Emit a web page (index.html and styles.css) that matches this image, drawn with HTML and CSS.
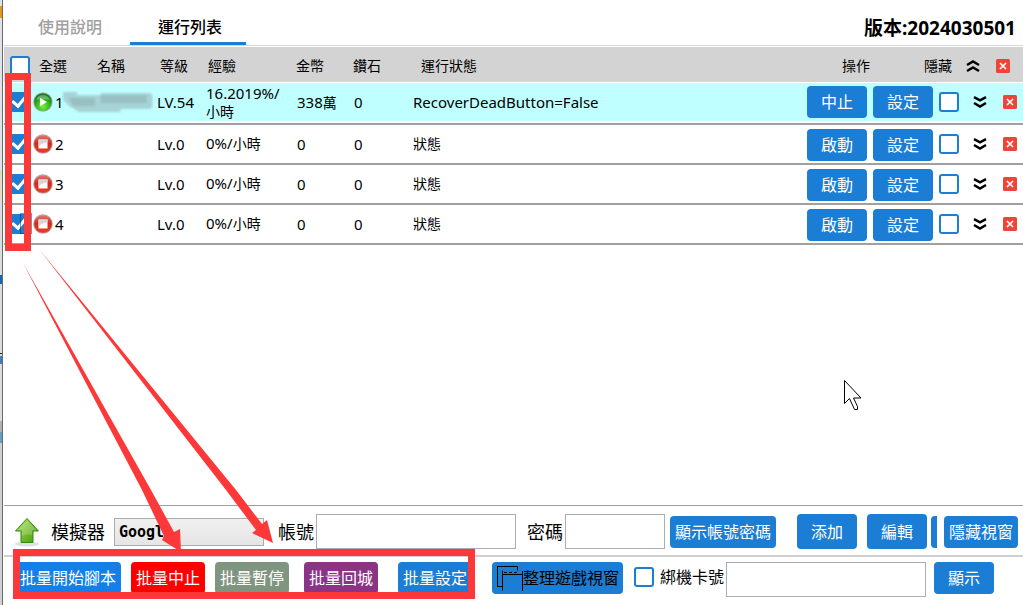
FILE: index.html
```html
<!DOCTYPE html>
<html lang="zh-Hant">
<head>
<meta charset="utf-8">
<title>運行列表</title>
<link rel="stylesheet" href="styles.css">
</head>
<body>
<svg class="defs" aria-hidden="true">
  <defs>
    <radialGradient id="gGreen" cx="50%" cy="75%" r="65%"><stop offset="0" stop-color="#7df03c"/><stop offset="0.6" stop-color="#2cb61c"/><stop offset="1" stop-color="#157a18"/></radialGradient>
    <linearGradient id="gRed" x1="0" y1="0" x2="0" y2="1"><stop offset="0" stop-color="#e8796f"/><stop offset="0.45" stop-color="#cf2a20"/><stop offset="1" stop-color="#f03a1c"/></linearGradient>
    <linearGradient id="gUp" x1="0" y1="0" x2="1" y2="1"><stop offset="0" stop-color="#b4e45c"/><stop offset="1" stop-color="#3f9a0c"/></linearGradient>
    <symbol id="play" viewBox="0 0 20 20"><circle cx="10" cy="10" r="9.8" fill="#a9ada9"/><circle cx="10" cy="10" r="8.8" fill="url(#gGreen)"/><path d="M3 8a7.4 7.4 0 0 1 14 0q-7-2-14 0z" fill="#fff" opacity=".3"/><path d="M7 5.800 14 10l-7 4.200z" fill="#fff"/></symbol>
    <symbol id="stop" viewBox="0 0 20 20"><circle cx="10" cy="10" r="9.8" fill="#b0a8a8"/><circle cx="10" cy="10" r="8.800" fill="url(#gRed)"/><path d="M5.500 5.500h9v9h-9z" fill="#fff"/><path d="M5.500 5.500h9v3q-5 0-9 4z" fill="#d9d5d4"/></symbol>
    <symbol id="down" viewBox="0 0 14 14"><path d="M1 2.2 7 5.4l6-3.2M1 8l6 3.6L13 8" fill="none" stroke="#000" stroke-width="2.5"/></symbol>
    <symbol id="upx" viewBox="0 0 14 14"><path d="M1 6l6-3.6L13 6M1 12l6-3.6 6 3.6" fill="none" stroke="#000" stroke-width="2.3"/></symbol>
    <symbol id="close" viewBox="0 0 14 14"><rect width="14" height="14" rx="1.5" fill="#f04438"/><path d="M4 4l6 6M10 4l-6 6" stroke="#fff" stroke-width="1.6"/></symbol>
  </defs>
</svg>
<div class="edge"></div>
<div class="app">
  <header class="tabs">
    <nav class="tab-list">
      <a class="tab" href="#help">使用說明</a>
      <a class="tab active" href="#list">運行列表</a>
    </nav>
    <div class="version">版本:2024030501</div>
  </header>

  <main class="list">
    <table class="grid">
      <colgroup>
        <col class="c-check"><col class="c-id"><col class="c-name"><col class="c-lv"><col class="c-exp"><col class="c-gold"><col class="c-gem"><col><col class="c-ops">
      </colgroup>
      <thead>
        <tr>
          <th><input class="box" type="checkbox" id="all"></th>
          <th class="h-id"><label for="all">全選</label></th>
          <th class="h-name">名稱</th>
          <th class="h-lv">等級</th>
          <th class="h-lv">經驗</th>
          <th class="h-gold">金幣</th>
          <th class="h-gold">鑽石</th>
          <th class="h-status">運行狀態</th>
          <th><div class="head-ops"><span>操作</span><span class="h-hide">隱藏</span><button class="icon" aria-label="全部上移"><svg><use href="#upx"/></svg></button><button class="icon last" aria-label="全部刪除"><svg><use href="#close"/></svg></button></div></th>
        </tr>
      </thead>
      <tbody>
        <tr class="running">
          <td><input class="box" type="checkbox" checked aria-label="選擇 1"></td>
          <td colspan="2"><div class="id"><svg class="state"><use href="#play"/></svg>1<svg class="mask" viewBox="0 0 92 24"><path d="M2 2h14v3h24V3h48q4 0 4 4v8q0 4-4 4H60v3H18L8 16 2 10z"/><path class="m2" d="M40 5h46v8H40zM8 8h26v8H12z"/></svg></div></td>
          <td class="lv">LV.54</td><td class="exp">16.2019%/<br><span class="cjk">小時</span></td><td class="num">338<span class="cjk">萬</span></td><td class="num">0</td><td class="msg">RecoverDeadButton=False</td>
          <td><div class="ops"><button class="btn">中止</button><button class="btn">設定</button><input class="box" type="checkbox" aria-label="隱藏 1"><button class="icon" aria-label="下移"><svg><use href="#down"/></svg></button><button class="icon last" aria-label="刪除"><svg><use href="#close"/></svg></button></div></td>
        </tr>
        <tr class="idle">
          <td><input class="box" type="checkbox" checked aria-label="選擇 2"></td>
          <td colspan="2"><div class="id"><svg class="state"><use href="#stop"/></svg>2</div></td>
          <td class="lv">Lv.0</td><td class="exp">0%/<span class="cjk">小時</span></td><td class="num">0</td><td class="num">0</td><td class="msg cjk">狀態</td>
          <td><div class="ops"><button class="btn">啟動</button><button class="btn">設定</button><input class="box" type="checkbox" aria-label="隱藏 2"><button class="icon" aria-label="下移"><svg><use href="#down"/></svg></button><button class="icon last" aria-label="刪除"><svg><use href="#close"/></svg></button></div></td>
        </tr>
        <tr class="idle">
          <td><input class="box" type="checkbox" checked aria-label="選擇 3"></td>
          <td colspan="2"><div class="id"><svg class="state"><use href="#stop"/></svg>3</div></td>
          <td class="lv">Lv.0</td><td class="exp">0%/<span class="cjk">小時</span></td><td class="num">0</td><td class="num">0</td><td class="msg cjk">狀態</td>
          <td><div class="ops"><button class="btn">啟動</button><button class="btn">設定</button><input class="box" type="checkbox" aria-label="隱藏 3"><button class="icon" aria-label="下移"><svg><use href="#down"/></svg></button><button class="icon last" aria-label="刪除"><svg><use href="#close"/></svg></button></div></td>
        </tr>
        <tr class="idle">
          <td><input class="box" type="checkbox" checked aria-label="選擇 4"></td>
          <td colspan="2"><div class="id"><svg class="state"><use href="#stop"/></svg>4</div></td>
          <td class="lv">Lv.0</td><td class="exp">0%/<span class="cjk">小時</span></td><td class="num">0</td><td class="num">0</td><td class="msg cjk">狀態</td>
          <td><div class="ops"><button class="btn">啟動</button><button class="btn">設定</button><input class="box" type="checkbox" aria-label="隱藏 4"><button class="icon" aria-label="下移"><svg><use href="#down"/></svg></button><button class="icon last" aria-label="刪除"><svg><use href="#close"/></svg></button></div></td>
        </tr>
      </tbody>
    </table>
  </main>

  <section class="bar account">
    <svg class="up" viewBox="0 0 26 30"><ellipse cx="13" cy="27" rx="12" ry="2.5" fill="#000" opacity=".12"/><path d="M13 1.5 24.5 14H19v11.500H7V14H1.500z" fill="url(#gUp)" stroke="#2f8a10" stroke-linejoin="round"/><path d="M13 3.500 22 13h-4v5q-6-2-10 1v-6H4z" fill="#fff" opacity=".2"/></svg>
    <label class="lab emu-lab" for="emu">模擬器</label>
    <select id="emu" class="emu"><option>Googl</option></select>
    <label class="lab acc-lab" for="acc">帳號</label>
    <input id="acc" class="field wide" type="text">
    <label class="lab pw-lab" for="pw">密碼</label>
    <input id="pw" class="field" type="text">
    <button class="btn show-pw">顯示帳號密碼</button>
    <button class="btn tall add">添加</button>
    <button class="btn tall edit">編輯</button>
    <button class="btn sliver" aria-label="更多"></button>
    <button class="btn four hide-win">隱藏視窗</button>
  </section>

  <section class="bar batch">
    <button class="btn start">批量開始腳本</button>
    <button class="btn four stop">批量中止</button>
    <button class="btn four pause">批量暫停</button>
    <button class="btn four town">批量回城</button>
    <button class="btn four setup">批量設定</button>
    <button class="btn arrange"><svg viewBox="0 0 26 26"><path d="M5.500 21.500H.5V1.500h20v4M5.500 5.500v20M5.500 9.500h20M25.500 6v20" fill="none" stroke="#000"/><path d="M7 7.500h13" fill="none" stroke="#000" stroke-dasharray="3 2"/></svg>整理遊戲視窗</button>
    <input class="box bind" type="checkbox" id="bind">
    <label class="bind-lab" for="bind">綁機卡號</label>
    <input class="field card" type="text" aria-label="卡號">
    <button class="btn">顯示</button>
  </section>
</div>

<svg class="marks" width="1023" height="605" viewBox="0 0 1023 605" aria-hidden="true">
  <path d="M20.500 213.500h11v20h-11z" fill="none" stroke="#222" stroke-dasharray="1 1"/>
  <g fill="none" stroke="#fc3838" stroke-width="7"><path d="M8.500 76.500h19v171h-19z"/><path d="M16.500 552.500h455v43h-455z"/></g>
  <g fill="#fc3838">
    <path d="M23 263 151 490 174 532 180 529 181 552 162 540 164 536 142 490z"/>
    <path d="M39 249 236 490 262 524 267 520 273 543 252 533 256 530 226 490z"/>
  </g>
  <path d="M844.500 380.500v23l5-5 5 11h3v-3l-4-8.500h7.500z" fill="#fff" stroke="#000"/>
</svg>
</body>
</html>
```
FILE: styles.css
```css
* { box-sizing: border-box; }

body {
  margin: 0;
  display: flex;
  min-height: 100vh;
  position: relative;
  background: #fff;
  color: #000;
  font: 15px/18px "Noto Sans", "Noto Sans CJK TC", sans-serif;
}

button, input, select { font: inherit; margin: 0; }
.defs { position: absolute; width: 0; height: 0; }

.edge {
  flex: none;
  width: 3px;
  border-right: 1px solid #6a6a6a;
  background: linear-gradient(#dfe3e8 6px, #e09a20 6px, #e09a20 18px, #dfe3e8 18px, #dfe3e8 170px, #e3dcc0 170px, #e3dcc0 200px, #dcdcdc 200px, #dcdcdc 275px, #1565b0 275px, #1565b0 284px, #dcdcdc 284px, #dcdcdc 353px, #222 353px, #222 354px, #dcdcdc 354px, #dcdcdc 356px, #3f7fc0 356px, #3f7fc0 364px, #dcdcdc 364px, #dcdcdc 421px, #b0b0b0 421px, #b0b0b0 432px, #62a0c0 432px, #62a0c0 443px, #d0d0d0 443px);
}

.app { flex: 1; min-width: 0; display: flex; flex-direction: column; }

.tabs {
  display: flex;
  justify-content: space-between;
  height: 46px;
  margin: 0 0 1px 1px;
  padding-right: 7px;
  border-bottom: 1px solid #d6d6d6;
}
.tab-list { display: flex; }
.tab {
  width: 116px;
  height: 45px;
  padding-left: 28px;
  color: #a0a0a0;
  font-size: 16px;
  font-weight: 500;
  line-height: 54px;
  text-decoration: none;
}
.tab:first-child { width: 126px; padding-left: 34px; }
.tab.active { color: #000; border-bottom: 3px solid #1b7dd4; }
.version { font-size: 19px; font-weight: 700; line-height: 56px; }

.list { flex: 1; padding-left: 1px; }
.grid { width: 100%; table-layout: fixed; border-collapse: separate; border-spacing: 0; }
.c-check { width: 28px; }
.c-id { width: 60px; }
.c-name { width: 61px; }
.c-lv { width: 48px; }
.c-exp { width: 88px; }
.c-gold, .c-gem { width: 57px; }
.c-ops { width: 220px; }

th {
  height: 36px;
  padding: 2px 0 0;
  background: #d3d3d3;
  border-bottom: 1px solid #fff;
  font-size: 14px;
  font-weight: 400;
  text-align: left;
  white-space: nowrap;
}
th.h-id { padding-left: 7px; }
th.h-name { padding-left: 5px; }
th.h-lv { padding-left: 7px; }
th.h-gold { padding-left: 7px; }
th.h-status { padding-left: 18px; }
.head-ops { display: flex; align-items: center; padding: 0 13px 0 39px; }
.h-hide { margin: 0 14px 0 auto; }

td { height: 40px; padding: 0 0 1px; border-bottom: 2px solid #a0a0a0; white-space: nowrap; }
.running td {
  height: 42px;
  padding-bottom: 2px;
  background: linear-gradient(#c0ffff 38px, #fff 38px);
}
td.lv { padding-left: 4px; }
td.exp { padding-left: 5px; }
td.num { padding-left: 8px; }
td.msg { padding-left: 10px; }
.cjk { font-size: 14px; }
.id { display: flex; align-items: center; }
.state { width: 20px; height: 20px; margin: 0 2px 0 1px; }
.mask { width: 92px; height: 24px; fill: #a6d3d6; filter: blur(1px); margin-left: -2px; }
.m2 { fill: #98bfc2; }

.box {
  appearance: none;
  display: block;
  flex: none;
  width: 20px;
  height: 20px;
  margin-left: 6px;
  border: 2px solid #1b7dd4;
  border-radius: 3px;
  background: #fff;
}
.box:checked {
  background: #1b7dd4;
  position: relative;
}
.box:checked::after {
  content: "";
  position: absolute;
  left: 3px;
  top: -2px;
  width: 6px;
  height: 12px;
  border: solid #fff;
  border-width: 0 3px 3px 0;
  transform: rotate(40deg);
}

.ops { display: flex; align-items: center; gap: 6px; padding-left: 4px; }
.ops .box { margin: 0; }
.idle .btn { margin-top: 3px; }
.icon { flex: none; width: 14px; height: 14px; padding: 0; border: 0; background: none; }
.icon svg { display: block; width: 14px; height: 14px; }
.ops .icon { margin-left: 8px; }
.ops .icon.last { margin-left: 10px; }
.head-ops .icon.last { margin-left: 16px; }

.btn {
  flex: none;
  width: 60px;
  height: 32px;
  padding: 0;
  border: 0;
  border-radius: 4px;
  background: #1b7dd4;
  color: #fff;
  font-size: 16px;
  white-space: nowrap;
}
.four { width: 74px; }
.tall { height: 35px; }

.bar { display: flex; margin-left: 1px; }
.account { align-items: center; height: 50px; border-top: 1px solid #a0a0a0; padding: 2px 5px 0 10px; }
.up { flex: none; width: 26px; height: 30px; }
.lab { flex: none; font-size: 18px; line-height: 24px; white-space: nowrap; }
.emu-lab { margin: 0 9px 0 11px; }
.emu {
  appearance: none;
  flex: none;
  width: 150px;
  height: 28px;
  padding: 0 4px;
  border: 1px solid #acacac;
  border-radius: 0;
  background: linear-gradient(#f0f0f0, #e5e5e5);
  color: #000;
  font: 700 15px "DejaVu Sans Mono", monospace;
}
.acc-lab { margin: 0 2px 0 14px; }
.pw-lab { margin: 0 2px 0 11px; }
.field { flex: 1 1 100px; min-width: 0; height: 35px; border: 1px solid #abadb3; border-radius: 0; background: #fff; }
.wide { flex: 2 1 200px; }
.show-pw { width: 106px; margin: 0 21px 0 5px; }
.edit { margin: 0 4px 0 10px; }
.sliver { width: 6px; border-radius: 4px 0 0 4px; margin-right: 7px; }

.batch { align-items: flex-start; height: 50px; border-top: 2px solid #d0d0d0; padding: 5px 29px 0 11px; }
.start { width: 106px; margin-right: 10px; background: #147fe8; }
.stop { background: #f00; margin-right: 10px; }
.pause { background: #809580; margin-right: 15px; }
.town { background: #8b3485; margin-right: 20px; }
.setup { margin-right: 20px; }
.arrange { display: flex; align-items: center; width: 131px; padding-left: 5px; color: #000; }
.arrange svg { width: 26px; height: 26px; }
.bind { margin: 5px 6px 0 11px; }
.bind-lab { flex: none; margin-right: 2px; font-size: 16px; line-height: 30px; }
.card { flex-basis: 200px; margin-right: 8px; }

.marks { position: absolute; left: 0; top: 0; pointer-events: none; }
```
